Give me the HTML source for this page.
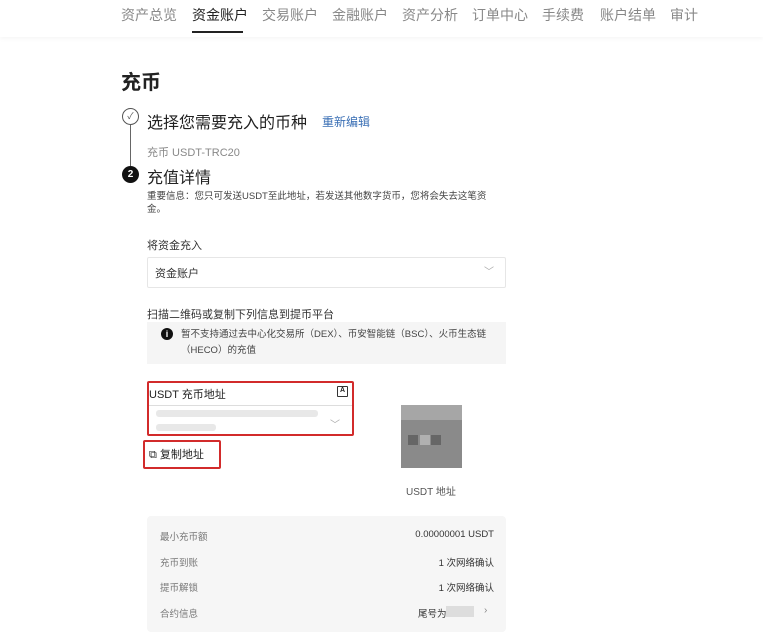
<!DOCTYPE html>
<html><head><meta charset="utf-8"><style>
*{margin:0;padding:0;box-sizing:border-box}
body{width:763px;height:642px;background:#fff;font-family:"Liberation Sans","Noto Sans CJK SC",sans-serif;position:relative;overflow:hidden;color:#222}
.a{position:absolute;white-space:nowrap}
.nav{position:absolute;left:0;top:0;width:763px;height:37px;background:#fff;box-shadow:0 2px 4px rgba(0,0,0,0.04)}
.nav span{position:absolute;top:5px;font-size:14px;color:#888}
</style></head><body>
<div class="nav">
<span style="left:121px">资产总览</span>
<span style="left:192px;color:#222">资金账户</span>
<span style="left:262px">交易账户</span>
<span style="left:332px">金融账户</span>
<span style="left:402px">资产分析</span>
<span style="left:472px">订单中心</span>
<span style="left:542px">手续费</span>
<span style="left:600px">账户结单</span>
<span style="left:670px">审计</span>
<div style="position:absolute;left:192px;top:31px;width:51px;height:2px;background:#222"></div>
</div>
<div class="a" style="left:121px;top:66px;font-size:20px;font-weight:bold">充币</div>
<div class="a" style="left:122px;top:108px;width:17px;height:17px;border:1.5px solid #555;border-radius:50%;font-size:9px;text-align:center;line-height:14px;color:#555">✓</div>
<div class="a" style="left:129.5px;top:125px;width:1.5px;height:41px;background:#666"></div>
<div class="a" style="left:147px;top:109px;font-size:16px">选择您需要充入的币种</div>
<div class="a" style="left:322px;top:113px;font-size:12px;color:#3a6fb5">重新编辑</div>
<div class="a" style="left:147px;top:144px;font-size:11px;color:#888">充币 USDT-TRC20</div>
<div class="a" style="left:122px;top:166px;width:17px;height:17px;background:#111;border-radius:50%;color:#fff;font-size:10px;font-weight:bold;text-align:center;line-height:17px">2</div>
<div class="a" style="left:147px;top:164px;font-size:16px">充值详情</div>
<div class="a" style="left:147px;top:190px;font-size:9.5px;color:#444;line-height:13px;white-space:normal;width:345px">重要信息：您只可发送USDT至此地址，若发送其他数字货币，您将会失去这笔资金。</div>
<div class="a" style="left:147px;top:237px;font-size:11px;color:#333">将资金充入</div>
<div class="a" style="left:147px;top:257px;width:359px;height:31px;border:1px solid #e6e6e6;border-radius:2px"></div>
<div class="a" style="left:155px;top:265px;font-size:11px;color:#333">资金账户</div>
<div class="a" style="left:484px;top:263px;font-size:10px;color:#aaa">﹀</div>
<div class="a" style="left:147px;top:306px;font-size:11px;color:#333">扫描二维码或复制下列信息到提币平台</div>
<div class="a" style="left:147px;top:322px;width:359px;height:42px;background:#f5f5f5"></div>
<div class="a" style="left:161px;top:328px;width:12px;height:12px;background:#111;border-radius:50%;color:#fff;font-size:9px;font-weight:bold;text-align:center;line-height:12px">i</div>
<div class="a" style="left:181px;top:327px;font-size:9.5px;color:#444;line-height:16px;white-space:normal;width:320px">暂不支持通过去中心化交易所（DEX）、币安智能链（BSC）、火币生态链（HECO）的充值</div>
<div class="a" style="left:147px;top:381px;width:207px;height:55px;border:2px solid #d22b2b;border-radius:2px"></div>
<div class="a" style="left:149px;top:386px;font-size:11px;color:#222">USDT 充币地址</div>
<div class="a" style="left:337px;top:386px;width:11px;height:11px;border:1.5px solid #333;border-radius:1px;font-size:7px;line-height:8px;text-align:center;font-weight:bold">A</div>
<div class="a" style="left:149px;top:405px;width:203px;height:1px;background:#ddd"></div>
<div class="a" style="left:156px;top:410px;width:162px;height:7px;background:#e8e8e8;border-radius:3px"></div>
<div class="a" style="left:156px;top:424px;width:60px;height:7px;background:#e8e8e8;border-radius:3px"></div>
<div class="a" style="left:330px;top:416px;font-size:10px;color:#aaa">﹀</div>
<div class="a" style="left:143px;top:440px;width:78px;height:29px;border:2px solid #d22b2b;border-radius:2px"></div>
<div class="a" style="left:149px;top:446px;font-size:11px;color:#222">⧉ 复制地址</div>
<div class="a" style="left:401px;top:405px;width:61px;height:63px;background:#8a8a8a"></div>
<div class="a" style="left:401px;top:405px;width:61px;height:15px;background:#a6a6a6"></div>
<div class="a" style="left:408px;top:435px;width:10px;height:10px;background:#666"></div>
<div class="a" style="left:420px;top:435px;width:10px;height:10px;background:#b0b0b0"></div>
<div class="a" style="left:431px;top:435px;width:10px;height:10px;background:#666"></div>
<div class="a" style="left:406px;top:483px;font-size:10px;color:#555">USDT 地址</div>
<div class="a" style="left:147px;top:516px;width:359px;height:116px;background:#f6f6f6;border-radius:4px"></div>
<div class="a" style="left:160px;top:529px;font-size:9.5px;color:#777">最小充币额</div>
<div class="a" style="left:160px;top:555px;font-size:9.5px;color:#777">充币到账</div>
<div class="a" style="left:160px;top:580px;font-size:9.5px;color:#777">提币解锁</div>
<div class="a" style="left:160px;top:606px;font-size:9.5px;color:#777">合约信息</div>
<div class="a" style="right:269px;top:529px;font-size:9.5px;color:#333">0.00000001 USDT</div>
<div class="a" style="right:269px;top:555px;font-size:9.5px;color:#333">1 次网络确认</div>
<div class="a" style="right:269px;top:580px;font-size:9.5px;color:#333">1 次网络确认</div>
<div class="a" style="left:418px;top:606px;font-size:9.5px;color:#333">尾号为</div>
<div class="a" style="left:446px;top:606px;width:28px;height:11px;background:#ddd"></div>
<div class="a" style="left:484px;top:605px;font-size:10px;color:#888">›</div>
</body></html>
